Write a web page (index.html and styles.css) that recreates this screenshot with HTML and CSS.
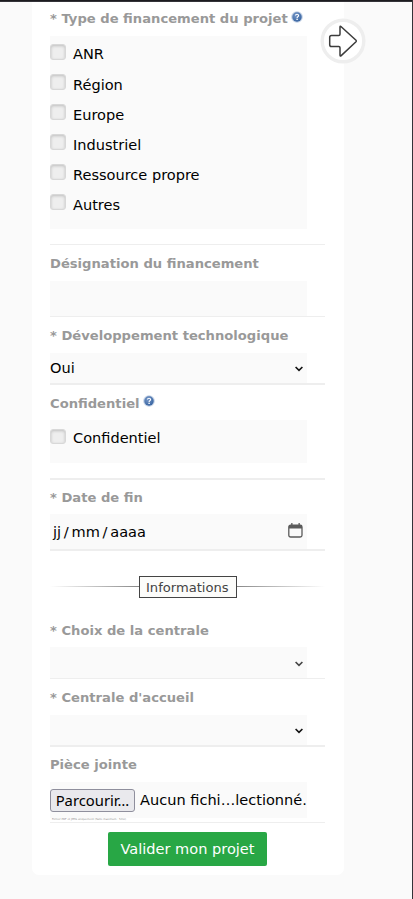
FILE: index.html
```html
<!DOCTYPE html>
<html lang="fr">
<head>
<meta charset="utf-8">
<title>Projet</title>
<link rel="stylesheet" href="styles.css">
</head>
<body>
<svg class="defs" width="0" height="0">
  <defs>
    <radialGradient id="help-fill" cx=".4" cy=".35" r=".7"><stop offset="0" stop-color="#7798c8"/><stop offset="1" stop-color="#34619f"/></radialGradient>
    <symbol id="help" viewBox="0 0 12 12">
      <circle cx="6" cy="6" r="5.8" fill="#c3d1e5"/>
      <circle cx="6" cy="6" r="4.7" fill="url(#help-fill)"/>
      <path d="M4.4 4.6C4.4 2.8 7.7 2.8 7.6 4.6C7.5 5.7 6.1 5.7 6.1 7" fill="none" stroke="#fff" stroke-width="1.1"/>
      <rect x="5.4" y="7.7" width="1.4" height="1.3" fill="#fff"/>
    </symbol>
    <symbol id="chevron" viewBox="0 0 8 6"><path d="M.6 1L4 4.4L7.4 1" fill="none" stroke="currentColor" stroke-width="1.6"/></symbol>
  </defs>
</svg>
<main class="card">
  <section class="field">
    <div class="label">* Type de financement du projet<svg class="help"><use href="#help"/></svg></div>
    <div class="box choices funding">
      <label class="choice"><i class="check"></i><span>ANR</span></label>
      <label class="choice"><i class="check"></i><span>Région</span></label>
      <label class="choice"><i class="check"></i><span>Europe</span></label>
      <label class="choice"><i class="check"></i><span>Industriel</span></label>
      <label class="choice"><i class="check"></i><span>Ressource propre</span></label>
      <label class="choice"><i class="check"></i><span>Autres</span></label>
    </div>
  </section>
  <section class="field">
    <div class="label">Désignation du financement</div>
    <div class="box text-input"></div>
  </section>
  <section class="field thick">
    <div class="label">* Développement technologique</div>
    <div class="box select"><span>Oui</span><svg class="chevron"><use href="#chevron"/></svg></div>
  </section>
  <section class="field thick">
    <div class="label short">Confidentiel<svg class="help"><use href="#help"/></svg></div>
    <div class="box choices secret">
      <label class="choice"><i class="check"></i><span>Confidentiel</span></label>
    </div>
  </section>
  <section class="field thick">
    <div class="label date-label">* Date de fin</div>
    <div class="box date"><span class="date-parts"><span>jj</span><span>/</span><span>mm</span><span>/</span><span>aaaa</span></span>
      <svg class="calendar" viewBox="0 0 15 15"><rect x=".8" y="2.2" width="13.2" height="11.8" rx="1.8" fill="none" stroke="#5b5b5b" stroke-width="1.3"/><path d="M1 2h13v3.4H1zM3.2 0h1.3v3H3.2zM10.5 0h1.3v3h-1.3z" fill="#5b5b5b"/></svg>
    </div>
  </section>
  <h2 class="divider"><span>Informations</span></h2>
  <section class="field">
    <div class="label low">* Choix de la centrale</div>
    <div class="box select tall"><span></span><svg class="chevron soft"><use href="#chevron"/></svg></div>
  </section>
  <section class="field thick">
    <div class="label">* Centrale d'accueil</div>
    <div class="box select"><span></span><svg class="chevron"><use href="#chevron"/></svg></div>
  </section>
  <section class="field">
    <div class="label short attachment">Pièce jointe</div>
    <div class="box file"><span class="browse">Parcourir…</span><span class="filename">Aucun fichi…lectionné.</span></div>
    <div class="hint">Fichier PDF et JPEG uniquement (Taille maximum : 5mo)</div>
  </section>
  <button class="submit" type="button">Valider mon projet</button>
</main>
<svg class="next" viewBox="0 0 46 46"><circle cx="23" cy="23" r="20.8" fill="#fff" stroke="#eee" stroke-width="3.4"/><path d="M20 9.2Q20 7.6 21.2 8.7L36 22.2Q36.8 23 36 23.8L21.2 37.6Q20 38.7 20 37V29.8Q20 28.6 18.8 28.6H11.5Q9.7 28.6 9.7 26.8V19.2Q9.7 17.4 11.5 17.4H18.8Q20 17.4 20 16.2Z" fill="#fff" stroke="#3c3c3c" stroke-width="1.5"/></svg>
</body>
</html>
```
FILE: styles.css
```css
* { box-sizing: border-box; }
body {
  margin: 0;
  height: 899px;
  overflow: hidden;
  background: #fafafa;
  border-right: 1px solid #343338;
  font-family: "DejaVu Sans", sans-serif;
  font-size: 14.55px;
  color: #000;
  position: relative;
}
body::before {
  content: "";
  position: absolute;
  inset: 0 0 auto;
  height: 2px;
  background: linear-gradient(#1c1b1f 50%, #343338 50%);
}
.defs { position: absolute; }
.card {
  width: 312px;
  height: 875px;
  margin-left: 32px;
  padding: 0 19px 0 18px;
  background: #fff;
  border-radius: 0 0 7px 7px;
}
.field { border-bottom: 1px solid #eee; }
.field.thick { border-bottom-width: 2px; }
.label {
  height: 36px;
  line-height: 38px;
  font-size: 13.14px;
  font-weight: bold;
  color: #999;
  white-space: nowrap;
  display: flex;
}
.label.low { line-height: 40px; }
.label.short { height: 35px; }
.label.attachment { line-height: 36px; }
.label.date-label { height: 34px; line-height: 35px; }
.help { width: 12px; height: 12px; margin: 11px 0 0 3px; }
.label.short .help { margin-top: 10px; }
.box { width: 257px; background: #fafafa; white-space: nowrap; }
.funding { height: 193px; padding-top: 8px; margin-bottom: 15px; }
.secret { height: 43px; padding-top: 9px; margin-bottom: 15px; }
.choice { display: flex; height: 30px; gap: 7px; }
.choice span { line-height: 20px; }
.secret .choice span { line-height: 18px; }
.choice + .choice span { line-height: 22px; }
.check {
  width: 16px;
  height: 16px;
  border: 1px solid #d8d8d8;
  border-radius: 3px;
  background: #eee;
  box-shadow: inset 0 1px 3px rgba(0, 0, 0, .2);
}
.secret .check { height: 15px; }
.text-input { height: 35px; }
.select {
  height: 30px;
  display: flex;
  align-items: center;
  justify-content: space-between;
  padding-right: 4px;
}
.select span { padding-bottom: 2px; }
.select.tall { height: 31px; }
.chevron { width: 8px; height: 6px; color: #111; margin-top: 1px; }
.chevron.soft { color: #444; margin-top: 2px; }
.date {
  height: 35px;
  display: flex;
  align-items: center;
  justify-content: space-between;
  padding: 0 4px 0 3px;
}
.date-parts { display: flex; gap: 2.75px; }
.calendar { width: 15px; height: 15px; margin-top: -2px; }
.divider {
  height: 60px;
  margin: 0;
  padding-top: 12px;
  display: flex;
  align-items: center;
  font-size: 13.1px;
  font-weight: normal;
  color: #444;
}
.divider span {
  width: 98px;
  height: 22px;
  line-height: 21px;
  padding-left: 6px;
  border: 1px solid #444;
  background: #fcfcfa;
}
.divider::before, .divider::after { content: ""; height: 1px; margin-bottom: 1px; }
.divider::before { width: 89px; background: linear-gradient(to right, #fff, #888); }
.divider::after { flex: 1; background: linear-gradient(to left, #fff, #888); }
.file { height: 36px; display: flex; align-items: center; gap: 5px; }
.filename { padding-bottom: 2px; }
.browse {
  width: 85px;
  height: 23px;
  line-height: 20px;
  text-align: center;
  border: 1px solid #8f8f9d;
  border-radius: 3px;
  background: #e9e9ed;
  font-family: "Noto Sans", sans-serif;
  font-size: 14.8px;
}
.hint { height: 4px; padding-left: 2px; font-size: 2.65px; line-height: 4px; color: #888; }
.submit {
  display: block;
  width: 159px;
  height: 34px;
  margin: 9px 0 0 58px;
  padding: 0 0 1px;
  border: 0;
  border-radius: 2px;
  background: #28a745;
  color: #fff;
  font: 14.55px "DejaVu Sans", sans-serif;
}
.next {
  position: absolute;
  left: 320px;
  top: 18px;
  width: 46px;
  height: 46px;
}
```
